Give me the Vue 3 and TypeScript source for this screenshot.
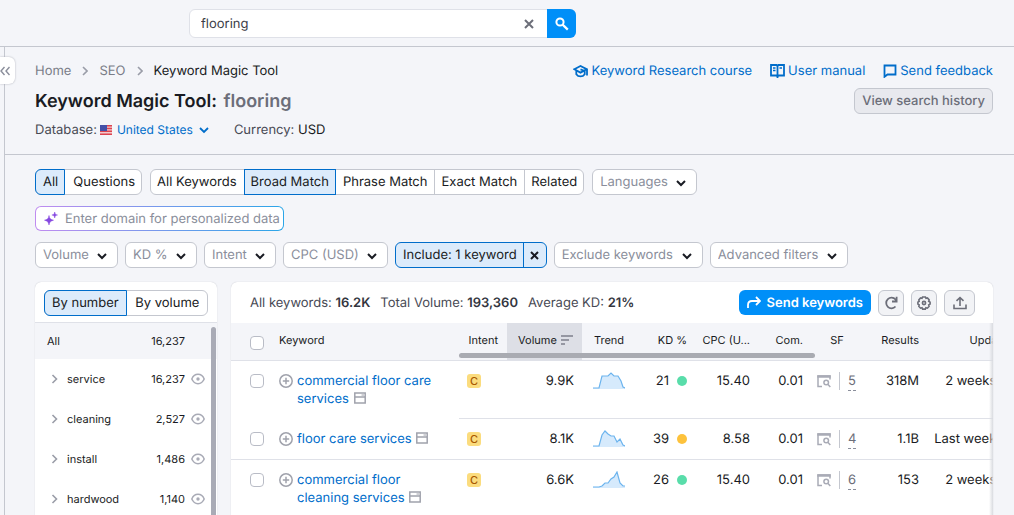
<script setup lang="ts">
import { ref } from 'vue'

interface Group { name: string; count: string }
interface Row {
  keyword: string
  volume: string
  trend: string
  kd: number
  level: 'easy' | 'medium'
  cpc: string
  com: string
  sf: number
  results: string
  updated: string
}

const query = ref('flooring')
const domain = ref('')
const scope = ref('All')
const match = ref('Broad Match')
const groupBy = ref('By number')

const scopes = ['All', 'Questions']
const matches = ['All Keywords', 'Broad Match', 'Phrase Match', 'Exact Match', 'Related']
const groupModes = ['By number', 'By volume']
const leadingFilters = ['Volume', 'KD %', 'Intent', 'CPC (USD)']
const trailingFilters = ['Exclude keywords', 'Advanced filters']

const groups: Group[] = [
  { name: 'service', count: '16,237' },
  { name: 'cleaning', count: '2,527' },
  { name: 'install', count: '1,486' },
  { name: 'hardwood', count: '1,140' },
]

const rows: Row[] = [
  { keyword: 'commercial floor care services', volume: '9.9K', trend: '0,16 6,16 9,4 15,4 18,1 21,4 25,4 28,9 30,15 32,16', kd: 21, level: 'easy', cpc: '15.40', com: '0.01', sf: 5, results: '318M', updated: '2 weeks ago' },
  { keyword: 'floor care services', volume: '8.1K', trend: '0,16 6,16 9,5 12,1 15,4 18,6 21,6 24,12 27,9 30,15 32,16', kd: 39, level: 'medium', cpc: '8.58', com: '0.01', sf: 4, results: '1.1B', updated: 'Last week ago' },
  { keyword: 'commercial floor cleaning services', volume: '6.6K', trend: '0,16 6,16 9,15 12,12 15,12 18,8 21,6 24,1 27,12 30,15 32,15', kd: 26, level: 'easy', cpc: '15.40', com: '0.01', sf: 6, results: '153', updated: '2 weeks ago' },
]

const lead = (text: string) => text.slice(0, text.lastIndexOf(' ') + 1)
const last = (text: string) => text.slice(text.lastIndexOf(' ') + 1)
</script>

<template>
  <div class="page">
    <header class="topbar">
      <form class="search" @submit.prevent>
        <input v-model="query" class="search-input" type="text" aria-label="Search" />
        <button class="clear" type="button" aria-label="Clear" @click="query = ''">
          <svg width="10" height="10" viewBox="0 0 10 10"><path d="M1 1l8 8M9 1l-8 8" fill="none" stroke="#6c6e79" stroke-width="2" /></svg>
        </button>
        <button class="search-go" type="submit" aria-label="Find">
          <svg width="14" height="14" viewBox="0 0 14 14" fill="none" stroke="#fff" stroke-width="2"><circle cx="5" cy="5" r="3.6" /><path d="M7.6 7.6l5.2 5" stroke-width="2.2" /></svg>
        </button>
      </form>
    </header>

    <div class="body">
      <aside class="rail">
        <button class="collapse" type="button" aria-label="Expand menu">
          <svg width="10" height="10" viewBox="0 0 10 10" fill="none" stroke="#8a8e9b" stroke-width="1.4"><path d="M4.5 1L1 5l3.500 4M9.500 1L6 5l3.500 4" /></svg>
        </button>
      </aside>

      <main class="main">
        <section class="intro">
          <div class="intro-left">
            <nav class="crumbs" aria-label="Breadcrumb">
              <a href="#home">Home</a>
              <svg width="6" height="10" viewBox="0 0 6 10"><path d="M1 1l4 4-4 4" fill="none" stroke="#9a9da8" stroke-width="1.600" /></svg>
              <a href="#seo">SEO</a>
              <svg width="6" height="10" viewBox="0 0 6 10"><path d="M1 1l4 4-4 4" fill="none" stroke="#9a9da8" stroke-width="1.600" /></svg>
              <span class="here">Keyword Magic Tool</span>
            </nav>
            <h1>Keyword Magic Tool: <span>flooring</span></h1>
            <div class="meta">
              <label for="database">Database:</label>
              <svg class="flag" width="12" height="10" viewBox="0 0 12 10">
                <rect width="12" height="10" fill="#f3c9cc" /><path d="M0 .8h12M0 3.500h12M0 6.300h12M0 9.200h12" stroke="#dc4450" stroke-width="1.400" /><rect width="7" height="6" fill="#4450a8" />
              </svg>
              <span class="country">
                <select id="database"><option>United States</option></select>
                <svg width="10" height="7" viewBox="0 0 10 7"><path d="M1 1l4 4 4-4" fill="none" stroke="#006dca" stroke-width="1.800" /></svg>
              </span>
              <span class="currency">Currency: <b>USD</b></span>
            </div>
          </div>
          <div class="intro-right">
            <nav class="links" aria-label="Help">
              <a href="#course">
                <svg width="15" height="14" viewBox="0 0 15 14" fill="none" stroke="#006dca" stroke-width="1.800"><path d="M1.300 5.200L7.500 2l6.200 3.200-6.200 3.400zM3.300 6.500v3.700c2 3 6.400 3 8.400 0V6.500M7.500 5.400l4.200 1.600M14 5v6.500" /></svg>
                Keyword Research course
              </a>
              <a href="#manual">
                <svg width="15" height="14" viewBox="0 0 15 14" fill="none" stroke="#006dca" stroke-width="1.800"><path d="M1 1h5.500l1 1 1-1H14v10.500H8.500l-1 1-1-1H1zM7.500 2v12" /><path d="M3 4h2.500M3 6.500h2.500M9.500 4H12" stroke-width="1.300" /></svg>
                User manual
              </a>
              <a href="#feedback">
                <svg width="14" height="14" viewBox="0 0 14 14" fill="none" stroke="#006dca" stroke-width="1.800"><path d="M1.500 1.500h11v9H4.500l-3 2.300z" /></svg>
                Send feedback
              </a>
            </nav>
            <button class="history" type="button">View search history</button>
          </div>
        </section>

        <section class="filters">
          <div class="line">
            <div class="seg scope">
              <button v-for="s in scopes" :key="s" type="button" :class="{ on: scope === s }" @click="scope = s">{{ s }}</button>
            </div>
            <div class="seg">
              <button v-for="m in matches" :key="m" type="button" :class="{ on: match === m }" @click="match = m">{{ m }}</button>
            </div>
            <span class="drop">
              <select aria-label="Languages"><option>Languages</option></select>
              <svg width="10" height="7" viewBox="0 0 10 7"><path d="M1 1l4 4 4-4" /></svg>
            </span>
          </div>
          <div class="line">
            <label class="domain">
              <svg width="14" height="14" viewBox="0 0 14 14" fill="#8649e1"><path d="M5 3.500c.5 3 1.500 4 4.500 4.700C6.500 9 5.500 10 5 13c-.5-3-1.500-4-4.500-4.800C3.500 7.500 4.500 6.500 5 3.500zM10.700 0c.2 2 .8 2.600 2.800 3-2 .4-2.600 1-2.800 3-.2-2-.8-2.600-2.800-3 2-.4 2.600-1 2.800-3z" stroke="#8649e1" stroke-width=".5" /></svg>
              <input v-model="domain" type="text" placeholder="Enter domain for personalized data" aria-label="Domain" />
            </label>
          </div>
          <div class="line tight">
            <span v-for="f in leadingFilters" :key="f" class="drop">
              <select :aria-label="f"><option>{{ f }}</option></select>
              <svg width="10" height="7" viewBox="0 0 10 7"><path d="M1 1l4 4 4-4" /></svg>
            </span>
            <div class="include">
              <button type="button">Include: 1 keyword</button>
              <button type="button" class="include-x" aria-label="Clear include filter">
                <svg width="9" height="9" viewBox="0 0 9 9"><path d="M1 1l7 7M8 1L1 8" fill="none" stroke="#191b23" stroke-width="2" /></svg>
              </button>
            </div>
            <span v-for="f in trailingFilters" :key="f" class="drop">
              <select :aria-label="f"><option>{{ f }}</option></select>
              <svg width="10" height="7" viewBox="0 0 10 7"><path d="M1 1l4 4 4-4" /></svg>
            </span>
          </div>
        </section>

        <div class="panels">
          <aside class="card groups">
            <div class="groups-head">
              <div class="seg">
                <button v-for="g in groupModes" :key="g" type="button" :class="{ on: groupBy === g }" @click="groupBy = g">{{ g }}</button>
              </div>
            </div>
            <div class="groups-body">
              <div class="all"><span>All</span><span>16,237</span></div>
              <ul>
                <li v-for="g in groups" :key="g.name">
                  <svg width="7" height="10" viewBox="0 0 7 10"><path d="M1.500 1l4 4-4 4" fill="none" stroke="#9a9da8" stroke-width="1.600" /></svg>
                  <span class="name">{{ g.name }}</span>
                  <span>{{ g.count }}</span>
                  <button class="icon" type="button" :aria-label="'Exclude ' + g.name">
                    <svg width="14" height="12" viewBox="0 0 14 12" fill="none" stroke="#a9abb6" stroke-width="1.500"><path d="M.8 6C3.500-.2 10.500-.2 13.200 6 10.500 12.200 3.500 12.200.8 6z" /><circle cx="7" cy="6" r="1.700" fill="#a9abb6" stroke="none" /></svg>
                  </button>
                </li>
              </ul>
              <span class="thumb"></span>
            </div>
          </aside>

          <section class="card results">
            <div class="toolbar">
              <p>All keywords: <b>16.2K</b></p>
              <p>Total Volume: <b>193,360</b></p>
              <p>Average KD: <b>21%</b></p>
              <button class="send" type="button">
                <svg width="14" height="13" viewBox="0 0 14 13" fill="none" stroke="#fff" stroke-width="1.800"><path d="M1 12V9c0-2.500 1.500-4 4-4h7.500M9 1l4 4-4 4" /></svg>
                Send keywords
              </button>
              <button class="tool" type="button" aria-label="Refresh">
                <svg width="14" height="14" viewBox="0 0 14 14" fill="none" stroke="#6c6e79" stroke-width="1.800"><path d="M11.500 10.500A5.300 5.300 0 1 1 11.500 3.500L12.500 5M12.600 .8v4.700H8" /></svg>
              </button>
              <button class="tool" type="button" aria-label="Settings">
                <svg width="14" height="14" viewBox="0 0 14 14" fill="none" stroke="#6c6e79" stroke-width="1.600"><path d="M5.600 1h2.800l.6 1.400 1.500-.4 1.700 1.900-.5 1.400 1.400.8v2l-1.400.8.4 1.500-1.700 1.800-1.500-.5-.6 1.400H5.600L5 11.700l-1.500.5-1.700-1.800.4-1.500L.9 8.100v-2l1.300-.8-.4-1.400L3.500 2l1.500.4z" /><circle cx="7" cy="7" r="1.600" /></svg>
              </button>
              <button class="tool wide" type="button" aria-label="Export">
                <svg width="14" height="14" viewBox="0 0 14 14" fill="none" stroke="#6c6e79" stroke-width="1.600"><path d="M1 8.500v4h12v-4M7 10V1.500M3.500 4.800L7 1.500l3.500 3.300" /></svg>
              </button>
            </div>

            <div class="scroller">
              <table>
                <colgroup>
                  <col class="c-check" /><col class="c-key" /><col class="c-intent" /><col class="c-vol" /><col class="c-trend" /><col class="c-kd" /><col class="c-cpc" /><col class="c-com" /><col class="c-sf" /><col class="c-res" /><col class="c-upd" />
                </colgroup>
                <thead>
                  <tr>
                    <th class="check"><input type="checkbox" aria-label="Select all" /></th>
                    <th class="left">Keyword</th>
                    <th>Intent</th>
                    <th class="sorted">Volume <svg width="12" height="10" viewBox="0 0 12 10"><path d="M0 1h12M0 5h8M0 9h4" stroke="#7d808c" stroke-width="1.600" /></svg></th>
                    <th class="trend">Trend</th>
                    <th>KD %</th>
                    <th>CPC (U...</th>
                    <th>Com.</th>
                    <th class="mid">SF</th>
                    <th>Results</th>
                    <th class="upd">Updated</th>
                  </tr>
                </thead>
                <tbody>
                  <tr v-for="r in rows" :key="r.keyword">
                    <td class="check"><input type="checkbox" :aria-label="'Select ' + r.keyword" /></td>
                    <td class="key">
                      <div class="key-box">
                        <button class="icon" type="button" :aria-label="'Add ' + r.keyword">
                          <svg width="14" height="14" viewBox="0 0 14 14" fill="none" stroke="#a0a2ac" stroke-width="1.500"><circle cx="7" cy="7" r="6.200" /><path d="M7 3.800v6.400M3.800 7h6.400" /></svg>
                        </button>
                        <a :href="'#' + r.keyword">{{ lead(r.keyword) }}<span class="tail">{{ last(r.keyword) }}
                          <svg width="12" height="12" viewBox="0 0 12 12" fill="none" stroke="#a0a2ac" stroke-width="1.500"><path d="M.8 1h10.400v10H.8zM.8 5h10.400" /><path d="M7.500 3H10" stroke-width="1" /></svg></span></a>
                      </div>
                    </td>
                    <td class="left intent"><span class="tag">C</span></td>
                    <td class="vol">{{ r.volume }}</td>
                    <td class="trend">
                      <svg width="32" height="17" viewBox="0 0 32 17"><polygon :points="'0,17 ' + r.trend + ' 32,17'" fill="#d6eafc" /><polyline :points="r.trend" fill="none" stroke="#6cb4ee" stroke-width="1.200" /></svg>
                    </td>
                    <td>{{ r.kd }}<i class="dot" :class="r.level"></i></td>
                    <td>{{ r.cpc }}</td>
                    <td>{{ r.com }}</td>
                    <td class="sf">
                      <div class="sf-box">
                        <svg width="14" height="13" viewBox="0 0 14 13" fill="none" stroke="#a9abb6" stroke-width="1.500"><path d="M5 11.500H1V1h12v3.500" /><path d="M.3 1.500h13.400" stroke-width="2.500" /><circle cx="9.200" cy="7.500" r="2.300" /><path d="M10.800 9.200l2.500 2.800" /></svg>
                        <span class="rule"></span>
                        <span class="n">{{ r.sf }}</span>
                      </div>
                    </td>
                    <td>{{ r.results }}</td>
                    <td class="upd">{{ r.updated }}</td>
                  </tr>
                </tbody>
              </table>
              <span class="hbar"></span>
              <span class="fade"></span>
            </div>
          </section>
        </div>
      </main>
    </div>
  </div>
</template>

<style>
body { margin: 0; background: #f4f5f9; }
</style>

<style scoped>
* { box-sizing: border-box; }
.page {
  display: flex; flex-direction: column; height: 100vh; overflow: hidden;
  background: #f4f5f9; color: #191b23; font: 13px/18px Inter, "Liberation Sans", sans-serif;
  text-rendering: geometricPrecision;
}
button, input, select { font: inherit; color: inherit; margin: 0; padding: 0; border: 0; background: none; text-rendering: inherit; }
input, select { outline: none; appearance: none; min-width: 0; }
button { cursor: pointer; }
svg { display: block; flex: none; }
a { color: #006dca; text-decoration: none; }

.topbar { flex: none; height: 47px; padding: 9px 20px 0 189px; border-bottom: 1px solid #c4c7cf; }
.search { display: flex; max-width: 387px; height: 29px; background: #fff; border: 1px solid #dfe1e8; border-radius: 6px; }
.search-input { flex: 1; padding: 0 11px; color: #3c3e48; }
.clear { width: 37px; display: grid; place-items: center; }
.search-go { width: 29px; margin: -1px -1px -1px 0; display: grid; place-items: center; background: #008ff8; border-radius: 0 6px 6px 0; }

.body { flex: 1; display: flex; min-height: 0; }
.rail { flex: none; width: 5px; border-right: 1px solid #c4c7cf; padding-top: 10px; }
.collapse { position: relative; display: flex; align-items: center; width: 15px; height: 27px; background: #fff; border-radius: 0 6px 6px 0; box-shadow: 0 0 2px #a9abb6; }
.main { flex: 1; min-width: 0; display: flex; flex-direction: column; }

.intro { flex: none; display: flex; justify-content: space-between; padding: 15px 21px 15px 30px; border-bottom: 1px solid #c4c7cf; }
.crumbs { display: flex; align-items: center; gap: 11px; }
.crumbs a { color: #7a7d88; }
h1 { margin: 10px 0 7px; font-size: 18px; line-height: 24px; font-weight: 600; }
h1 span { color: #6c6e79; margin-left: 2px; }
.meta { display: flex; align-items: center; color: #484a54; }
.flag { margin: 0 5px 0 3px; }
.country { display: flex; align-items: center; gap: 5px; color: #006dca; font-size: 12px; }
.currency { margin-left: 25px; }
.currency b { font-weight: 400; color: #191b23; }
.intro-right { display: flex; flex-direction: column; align-items: flex-end; gap: 8px; }
.links { display: flex; gap: 18px; }
.links a { display: flex; align-items: center; gap: 3px; }
.history { height: 26px; padding: 0 7px; font-weight: 500; color: #6c6e79; background: #e8e9ee; border: 1px solid #c4c7cf; border-radius: 6px; }

.filters { flex: none; display: flex; flex-direction: column; gap: 11px; padding: 14px 21px 14px 30px; }
.line { display: flex; gap: 8px; }
.line.tight { gap: 7px; }
.seg { display: flex; height: 26px; background: #fff; border: 1px solid #c4c7cf; border-radius: 6px; }
.seg button { margin: -1px 0; padding: 0 6px; white-space: nowrap; border: 1px solid transparent; }
.seg.scope button { padding: 0 6px 0 7px; }
.seg button + button { border-left: 1px solid #c4c7cf; }
.seg button.on { background: #dcebfb; border-color: #006dca; }
.seg button.on + button { border-left-color: transparent; }
.seg button:first-child { margin-left: -1px; border-radius: 6px 0 0 6px; }
.seg button:last-child { margin-right: -1px; border-radius: 0 6px 6px 0; }
.drop { display: flex; align-items: center; position: relative; height: 26px; background: #fff; border: 1px solid #c4c7cf; border-radius: 6px; color: #8a8e9b; }
.drop select { height: 24px; padding: 0 28px 0 7px; }
.drop svg { position: absolute; right: 10px; top: 10px; pointer-events: none; }
.drop path { fill: none; stroke: #191b23; stroke-width: 2; }
.domain { display: flex; align-items: center; gap: 7px; width: 249px; height: 25px; padding: 0 0 0 8px; border: 1px solid transparent; border-radius: 6px; background: linear-gradient(#fff, #fff) padding-box, linear-gradient(90deg, #c08cf0, #2ba6e8) border-box; }
.domain input { flex: 1; }
.domain input::placeholder { color: #8a8e9b; opacity: 1; }
.include { display: flex; height: 26px; background: #dcebfb; border: 1px solid #006dca; border-radius: 6px; }
.include button { padding: 0 6px 0 7px; }
.include .include-x { width: 23px; padding: 0; display: grid; place-items: center; border-left: 1px solid #006dca; }

.panels { flex: 1; min-height: 0; display: flex; gap: 14px; padding: 0 21px 0 30px; }
.card { background: #fff; border-radius: 6px 6px 0 0; box-shadow: 0 0 1px #b5b8c2; overflow: hidden; }
.groups { flex: none; width: 182px; font-size: 11px; }
.groups-head { padding: 8px 9px 6px; font-size: 13px; border-bottom: 1px solid #dfe1e8; }
.groups-head .seg button { padding: 0 7px; }
.groups-head .seg button:last-child { flex: 1; }
.groups-body { position: relative; height: 100%; }
.all { display: flex; justify-content: space-between; align-items: center; height: 36px; padding: 0 32px 0 12px; background: #f4f5f9; }
ul { list-style: none; margin: 0; padding: 0; }
li { display: flex; align-items: center; height: 40px; padding: 0 12px 0 16px; }
.name { flex: 1; margin-left: 9px; }
.icon { display: block; flex: none; }
li .icon { margin-left: 6px; }
.thumb { position: absolute; top: 4px; right: 1px; bottom: 0; width: 5px; border-radius: 3px; background: #a9abb6; }

.results { flex: 1; min-width: 0; }
.toolbar { display: flex; align-items: center; gap: 7px; height: 41px; padding: 0 18px 0 19px; color: #484a54; }
.toolbar p { margin: 0 3px 0 0; white-space: nowrap; }
.toolbar b { font-weight: 600; color: #33353e; }
.send { display: flex; align-items: center; gap: 6px; height: 25px; margin-left: auto; padding: 0 8px; border-radius: 6px; background: #008ff8; color: #fff; font-weight: 600; white-space: nowrap; }
.tool { display: grid; place-items: center; width: 26px; height: 26px; border: 1px solid #c4c7cf; border-radius: 6px; background: #f2f3f6; }
.tool.wide { width: 31px; }
.scroller { position: relative; overflow: hidden; height: 100%; }
table { width: 800px; table-layout: fixed; border-collapse: separate; border-spacing: 0; }
.c-check { width: 40px; } .c-key { width: 188px; } .c-intent { width: 48px; } .c-vol { width: 75px; }
.c-trend { width: 58px; } .c-kd { width: 53px; } .c-cpc { width: 63px; } .c-com { width: 53px; }
.c-sf { width: 56px; } .c-res { width: 60px; } .c-upd { width: 106px; }
th { height: 38px; padding: 0 6px 3px 0; font-size: 11px; font-weight: 400; text-align: right; vertical-align: middle; white-space: nowrap; background: #f4f5f9; border-bottom: 1px solid #dfe1e8; }
th:nth-child(3) { padding-right: 9px; }
th.left { text-align: left; padding-left: 8px; }
th.sorted { background: #dddfe6; text-align: left; padding-left: 11px; }
.sorted svg { display: inline-block; margin-left: 1px; vertical-align: -1px; }
th.trend { text-align: left; padding-left: 12px; }
th.mid { text-align: center; padding-right: 0; }
td { height: 41px; padding: 11px 6px 10px 0; text-align: right; vertical-align: top; white-space: nowrap; border-bottom: 1px solid #dfe1e8; }
tbody tr:nth-child(1) .check, tbody tr:nth-child(1) .key { border-bottom-color: transparent; }
tbody tr:last-child td { border-bottom: 0; }
th.check, td.check { padding-left: 19px; text-align: left; }
th.check { padding-top: 1px; padding-bottom: 0; }
.check input { display: block; width: 14px; height: 14px; margin-top: 2px; border: 1px solid #b9bcc6; border-radius: 4px; background: #fff; }
td.key { padding-left: 8px; padding-right: 16px; text-align: left; white-space: normal; }
.key-box { display: flex; gap: 4px; }
.key-box .icon { height: 14px; margin-top: 2px; }
.tail { white-space: nowrap; }
.tail svg { display: inline-block; margin-left: 1px; vertical-align: -1px; }
td.intent { text-align: left; padding-left: 8px; }
.tag { display: grid; place-items: center; width: 14px; height: 14px; margin-top: 2px; border-radius: 3px; background: #fbdc7e; color: #a75800; font-size: 11px; line-height: 14px; font-weight: 500; }
td.vol { padding-right: 8px; }
td.trend { padding-left: 11px; }
.dot { display: inline-block; width: 10px; height: 10px; margin-left: 8px; border-radius: 50%; vertical-align: -1px; }
.easy { background: #59ddaa; }
.medium { background: #fdc23c; }
td.sf { padding-left: 8px; }
.sf-box { display: flex; align-items: center; gap: 8px; height: 18px; }
.rule { width: 1px; height: 18px; background: #c4c7cf; }
.n { color: #6c6e79; border-bottom: 1px dashed #8a8e9b; margin-bottom: -1px; }
td.upd { padding-right: 8px; }
th.upd { padding-right: 17px; }
.hbar { position: absolute; left: 228px; top: 30px; width: 356px; height: 5px; border-radius: 3px; background: #a9abb2; }
.fade { position: absolute; top: 0; right: 0; bottom: 0; width: 4px; background: linear-gradient(90deg, transparent, #d9dbe0); }
</style>
